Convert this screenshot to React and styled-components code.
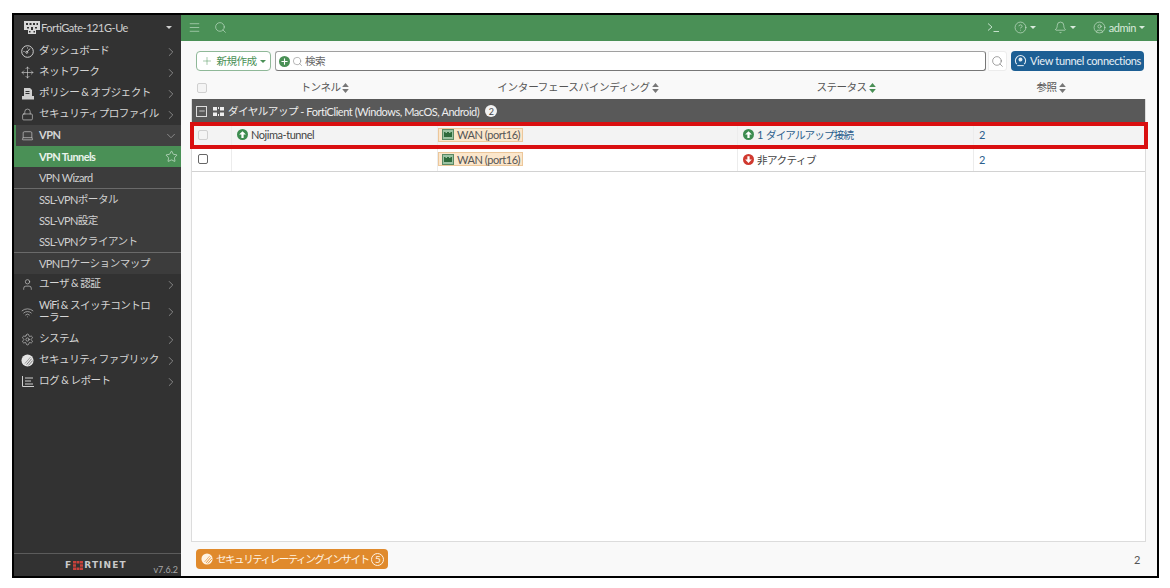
import React from 'react';
import styled, { createGlobalStyle } from 'styled-components';
import { ChevronRight, ChevronDown, Star, Search, Menu, Plus, Bell, CircleHelp, CircleUser, Move, User, Wifi, Settings, Lock, Laptop, Minus } from 'lucide-react';

const Global = createGlobalStyle`
  html, body { margin: 0; padding: 0; background: #fff; width: 1170px; height: 588px; overflow: hidden; }
  body { font-family: Lato, "Noto Sans CJK JP", sans-serif; font-size: 11px; color: #444; letter-spacing: -0.45px; }
  * { box-sizing: border-box; }
`;

const Frame = styled.div`
  position: relative; margin: 13px 0 0 12px; width: 1147px; height: 565px;
  border: 2px solid #000; display: flex; background: #f9f9f9;
`;
const Jp = styled.span`
  display: inline-block; font-size: 10.6px; letter-spacing: ${p => p.$ls ?? -0.55}px; white-space: nowrap;
  transform: translateY(${p => p.$flat ? 0 : -1}px);
`;
const Side = styled.aside`width: 167px; background: #323232; color: #d6d6d6; display: flex; flex-direction: column; flex: none;`;
const Brand = styled.div`height: 26px; display: flex; align-items: center; padding: 0 9px 1px 10px; gap: 1px; color: #cfcfcf; flex: none;`;
const BrandName = styled.span`flex: 1;`;
const Caret = styled.span`
  display: inline-block; width: 0; height: 0; border-left: 3px solid transparent; border-right: 3px solid transparent;
  border-top: 3.5px solid currentColor; flex: none;
`;
const Nav = styled.nav`flex: 1; display: flex; flex-direction: column;`;
const Item = styled.div`
  min-height: ${p => p.$tall ? 34 : 21}px; display: flex; align-items: center; padding: 0 3px 0 ${p => p.$bold ? 4 : 6}px; gap: 4px;
  font-weight: ${p => p.$bold ? 700 : 400}; line-height: 12.5px;
  background: ${p => p.$bold ? '#414141' : 'transparent'};
  border-left: ${p => p.$bold ? '2px solid #4a9056' : '0'};
`;
const ItemIcon = styled.span`width: 15px; height: 15px; display: flex; align-items: center; justify-content: center; color: #cfcfcf; flex: none;`;
const ItemText = styled.span`flex: 1;`;
const Arrow = styled.span`display: flex; color: #a8a8a8; flex: none;`;
const SubGroup = styled.div`background: #3c3c3c;`;
const Sub = styled.div`
  height: ${p => p.$sep ? 22 : 21}px; display: flex; align-items: center; padding: 0 3px ${p => p.$sep ? 1 : 0}px 25px;
  background: ${p => p.$active ? '#4a9056' : 'transparent'};
  color: ${p => p.$active ? '#e9f3eb' : '#d0d0d0'};
  font-weight: ${p => p.$active ? 700 : 400};
  letter-spacing: -0.6px;
  border-bottom: ${p => p.$sep ? '1px solid #6a6a6a' : '0'};
`;
const SideFoot = styled.div`height: 23px; border-top: 1px solid #5c5c5c; display: flex; align-items: center; position: relative; flex: none; padding-left: 51px;`;
const Logo = styled.div`display: flex; align-items: center; font-family: "DejaVu Sans", sans-serif; font-weight: 700; font-size: 9px; letter-spacing: 1.1px; color: #c9c9c9;`;
const Version = styled.span`position: absolute; right: 3px; bottom: 1px; font-size: 9px; letter-spacing: 0; color: #a8a8a8;`;

const Main = styled.main`flex: 1; min-width: 0; display: flex; flex-direction: column;`;
const Top = styled.header`height: 26px; background: #4a9056; display: flex; align-items: center; padding: 0 12px 2px 7px; color: #c4e0cb; flex: none;`;
const TopLeft = styled.div`display: flex; gap: 13px; align-items: center; flex: 1;`;
const TopRight = styled.div`display: flex; align-items: center; color: #d8eadc;`;
const TopBtn = styled.span`display: flex; align-items: center; gap: 3px; margin-left: ${p => p.$ml}px;`;

const Tools = styled.div`display: flex; align-items: center; height: 20px; margin: 10px 13px 0 15px; flex: none;`;
const NewBtn = styled.div`
  width: 75px; height: 20px; border: 1px solid #8fb898; border-radius: 4px; background: #fff; color: #4a9056;
  display: flex; align-items: center; justify-content: center; gap: 3px; flex: none;
`;
const SearchBox = styled.div`
  margin-left: 4px; flex: 1; height: 20px; background: #fff; border: 1px solid #a0a0a0; border-bottom-color: #777; border-right-color: #777; border-radius: 3px;
  display: flex; align-items: center; padding-left: 3px; gap: 2px; color: #666;
`;
const AddDot = styled.span`width: 11px; height: 11px; border-radius: 50%; background: #4a9056; color: #fff; display: flex; align-items: center; justify-content: center; flex: none;`;
const SearchBtn = styled.div`margin-left: 2px; width: 19px; height: 20px; background: #fff; border: 1px solid #ececec; border-radius: 0 3px 3px 0; display: flex; align-items: center; justify-content: center; color: #555; flex: none;`;
const ConnBtn = styled.div`
  margin-left: 4px; padding-bottom: 1px; width: 133px; height: 20px; background: #1d5f94; color: #e8f0f6; border-radius: 4px; flex: none; white-space: nowrap;
  display: flex; align-items: center; justify-content: center; gap: 3px; letter-spacing: -0.35px;
`;

const cols = '39px 206px 300px 236px 1fr';
const Head = styled.div`display: grid; grid-template-columns: ${cols}; height: 28px; padding-top: 5px; margin: 0 11px 0 10px; flex: none; align-items: center; color: #555;`;
const HeadCell = styled.div`display: flex; align-items: center; justify-content: center; padding-right: 16px; gap: 2px;`;
const CheckCell = styled.div`display: flex; align-items: center; padding-left: 6px; height: 100%;`;
const Check = styled.span`width: 10px; height: 10px; border-radius: 2px; border: 1px solid ${p => p.$dim ? '#d0d0d0' : '#666'}; background: ${p => p.$dim ? '#f4f4f4' : '#fff'}; display: block;`;
const Sort = styled.svg`width: 7px; height: 10px; flex: none; fill: ${p => p.$on ? '#4a9056' : '#777'};`;

const Panel = styled.section`flex: 1; margin: 0 11px 0 10px; background: #fff; border: 1px solid #dcdcdc; border-top: 0; min-height: 0;`;
const Group = styled.div`height: 24px; background: #595959; color: #eee; display: flex; align-items: center; padding-left: 4px; gap: 4px;`;
const Toggle = styled.span`width: 11px; height: 11px; margin-right: 2px; border: 1px solid #ddd; display: flex; align-items: center; justify-content: center; color: #fff; flex: none;`;
const Count = styled.span`width: 12px; height: 12px; border-radius: 50%; background: #f2f2f2; color: #444; font-size: 9px; letter-spacing: 0; display: flex; align-items: center; justify-content: center; margin-left: 2px;`;
const Row = styled.div`display: grid; grid-template-columns: ${cols}; height: ${p => p.$h}px; background: ${p => p.$alt ? '#f3f3f3' : '#fff'}; border-bottom: 1px solid ${p => p.$last ? '#d2d2d2' : '#eee'};`;
const Cell = styled.div`display: flex; align-items: center; padding-left: 5px; border-left: 1px solid #ececec; gap: 3px; color: ${p => p.$link ? '#2c5f8d' : '#444'};`;
const Badge = styled.span`
  display: flex; align-items: center; gap: 3px; height: 14px; padding: 0 2px 0 3px; margin-left: -5px; background: #fbe6cb; border: 1px solid #ecc79a; color: #555;
`;
const State = styled.span`width: 11px; height: 11px; border-radius: 50%; background: ${p => p.$c}; display: flex; align-items: center; justify-content: center; flex: none;`;

const Foot = styled.footer`height: 34px; margin: 0 11px 0 15px; display: flex; align-items: center; justify-content: space-between; flex: none;`;
const Rating = styled.div`width: 192px; height: 20px; background: #e08a2c; color: #fff3e2; border-radius: 4px; display: flex; align-items: center; padding-left: 5px; gap: 3px;`;
const RatingNum = styled.span`width: 13px; height: 13px; border: 1px solid #fff3e2; border-radius: 50%; display: flex; align-items: center; justify-content: center; font-size: 10px; letter-spacing: 0; flex: none;`;
const Total = styled.span`padding-right: 6px; color: #555;`;
const Highlight = styled.div`position: absolute; left: 176px; top: 107px; width: 958px; height: 27px; border: 4px solid #d90f10; pointer-events: none;`;

const SortIcon = ({ on }) => (
  <Sort viewBox="0 0 6 9" $on={on}><path d="M3 0 6 3.6H0zM3 9 0 5.4h6z" /></Sort>
);
const Fabric = ({ size = 13, stripe = '#777', fill = '#e4e4e4' }) => (
  <svg width={size} height={size} viewBox="0 0 14 14">
    <circle cx="7" cy="7" r="6.500" fill={fill} />
    <path d="M6 11.500 11.500 5M8 12.300 12.600 7" stroke={stripe} strokeWidth="1" />
    <path d="M4.200 10.300 10.300 3.300" stroke={stripe} strokeWidth=".7" />
  </svg>
);
const Dial = () => (
  <svg width="13" height="13" viewBox="0 0 13 13" fill="none" stroke="currentColor" strokeWidth="1">
    <circle cx="6.500" cy="6.500" r="5.800" /><path d="M6 7 9 3.500" /><circle cx="5.800" cy="7.300" r="1" />
    <path d="M2.500 6.500h1M6.500 2.500v1" />
  </svg>
);
const Policy = () => (
  <svg width="12" height="12" viewBox="0 0 12 12" fill="#cfcfcf">
    <path d="M2 0h6l2 2v6H2z" /><path d="M0 8h12v3.500H0z" /><path d="M3.500 3h4v1h-4zM3.500 5h4v1h-4z" fill="#323232" />
  </svg>
);
const Device = () => (
  <svg width="16" height="13" viewBox="0 0 16 13" fill="#d8d8d8">
    <path d="M0 0h16v9H12v4H4V9H0z" />
    <path d="M2 2h2v2H2zM5.500 2h2v2h-2zM9 2h2v2H9zM12.500 2h1.500v2h-1.500zM3 6h2v1.500H3zM7 6h2v3H7zM11 6h2v1.500h-2zM5 10h1.500v1.500H5zM9.500 10H11v1.500H9.500z" fill="#323232" />
  </svg>
);
const LogoMark = () => (
  <svg width="10" height="9" viewBox="0 0 10 9" style={{ margin: '0 1px' }} fill="#c8413a">
    <path d="M0 0h3v2.500H0zM3.500 0h3v2.500h-3zM7 0h3v2.500H7zM0 3.200h3v2.600H0zM7 3.200h3v2.600H7zM0 6.500h3V9H0zM3.500 6.500h3V9h-3zM7 6.500h3V9H7z" />
  </svg>
);
const Cross = () => (
  <svg width="11" height="9" viewBox="0 0 11 9" fill="#eee">
    <path d="M0 0h4v3.500H0zM5 0h1v2H5zM7 0h4v3.500H7zM0 5.500h4V9H0zM7 5.500h4V9H7zM5 7h1v2H5z" />
  </svg>
);
const Tunnel = () => (
  <svg width="13" height="13" viewBox="0 0 14 14" fill="none" stroke="#e8f0f6" strokeWidth="1.100">
    <path d="M3 11a5.500 5.500 0 1 1 8 0" /><circle cx="7" cy="6" r="1.600" fill="#e8f0f6" /><path d="M3.500 12.500h7" />
  </svg>
);
const Port = () => (
  <svg width="12" height="11" viewBox="0 0 12 11">
    <rect x=".5" y=".5" width="11" height="10" fill="#9cc3a3" stroke="#5b8a64" />
    <path d="M2 8V3h1.500v1H5V3h2v1h1.500V3H10v5z" fill="#2f6b3c" />
  </svg>
);
const Up = () => (
  <State $c="#3d8c50"><svg width="9" height="9" viewBox="0 0 8 8"><path d="M4 1 7 4H5v3H3V4H1z" fill="#fff" /></svg></State>
);
const Down = () => (
  <State $c="#d0392f"><svg width="9" height="9" viewBox="0 0 8 8"><path d="M4 7 1 4h2V1h2v3h2z" fill="#fff" /></svg></State>
);
const Prompt = () => (
  <svg width="12" height="11" viewBox="0 0 12 11" fill="none" stroke="#c4e0cb"><path d="M1 1.500 5 5 1 8.500M6.500 9.500H12" /></svg>
);

const chev = <Arrow><ChevronRight size={14} strokeWidth={1.200} /></Arrow>;
const S = 13, W = 1.200;
const items1 = [
  [<Dial />, 'ダッシュボード'],
  [<Move size={S} strokeWidth={W} />, 'ネットワーク'],
  [<Policy />, 'ポリシー & オブジェクト'],
  [<Lock size={S} strokeWidth={W} />, 'セキュリティプロファイル'],
];
const items2 = [
  [<User size={S} strokeWidth={W} />, 'ユーザ & 認証'],
  [<Wifi size={S} strokeWidth={W} />, <>WiFi & スイッチコントロ<br />ーラー</>, true],
  [<Settings size={S} strokeWidth={W} />, 'システム'],
  [<Fabric />, 'セキュリティファブリック'],
  [<svg width="12" height="11" viewBox="0 0 12 11" fill="none" stroke="#cfcfcf"><path d="M.5 0v10.500H12M3 2h8M3 5h6M3 8h8" /></svg>, 'ログ & レポート'],
];

const NavRow = ({ icon, text, tall }) => (
  <Item $tall={tall}>
    <ItemIcon>{icon}</ItemIcon><ItemText><Jp>{text}</Jp></ItemText>{chev}
  </Item>
);

export default function App() {
  return (
    <>
      <Global />
      <Frame>
        <Side>
          <Brand><Device /><BrandName>FortiGate-121G-Ue</BrandName><Caret /></Brand>
          <Nav>
            {items1.map(([i, t], n) => <NavRow key={n} icon={i} text={t} />)}
            <Item $bold>
              <ItemIcon><Laptop size={13} strokeWidth={1.200} /></ItemIcon><ItemText>VPN</ItemText><Arrow><ChevronDown size={14} strokeWidth={1.200} /></Arrow>
            </Item>
            <SubGroup>
              <Sub $active><ItemText>VPN Tunnels</ItemText><Star size={13} strokeWidth={1.100} color="#e8f4ea" /></Sub>
              <Sub $sep>VPN Wizard</Sub>
              <Sub>SSL-VPN<Jp>ポータル</Jp></Sub>
              <Sub>SSL-VPN<Jp>設定</Jp></Sub>
              <Sub $sep>SSL-VPN<Jp>クライアント</Jp></Sub>
              <Sub>VPN<Jp>ロケーションマップ</Jp></Sub>
            </SubGroup>
            {items2.map(([i, t, tall], n) => <NavRow key={n} icon={i} text={t} tall={tall} />)}
          </Nav>
          <SideFoot>
            <Logo>F<LogoMark />RTINET</Logo>
            <Version>v7.6.2</Version>
          </SideFoot>
        </Side>
        <Main>
          <Top>
            <TopLeft><Menu size={13} strokeWidth={1.200} /><Search size={13} strokeWidth={1.200} /></TopLeft>
            <TopRight>
              <Prompt />
              <TopBtn $ml={15}><CircleHelp size={13} strokeWidth={1.100} /><Caret /></TopBtn>
              <TopBtn $ml={18}><Bell size={13} strokeWidth={1.100} /><Caret /></TopBtn>
              <TopBtn $ml={17}><CircleUser size={13} strokeWidth={1.100} />admin<Caret /></TopBtn>
            </TopRight>
          </Top>
          <Tools>
            <NewBtn><Plus size={12} strokeWidth={1} /><Jp>新規作成</Jp><Caret /></NewBtn>
            <SearchBox>
              <AddDot><Plus size={9} strokeWidth={3} /></AddDot>
              <Search size={11} strokeWidth={1} />
              <Jp>検索</Jp>
            </SearchBox>
            <SearchBtn><Search size={13} strokeWidth={1} /></SearchBtn>
            <ConnBtn><Tunnel />View tunnel connections</ConnBtn>
          </Tools>
          <Head>
            <CheckCell><Check $dim /></CheckCell>
            <HeadCell><Jp>トンネル</Jp><SortIcon /></HeadCell>
            <HeadCell><Jp $ls={-0.3}>インターフェースバインディング</Jp><SortIcon /></HeadCell>
            <HeadCell><Jp>ステータス</Jp><SortIcon on /></HeadCell>
            <HeadCell><Jp>参照</Jp><SortIcon /></HeadCell>
          </Head>
          <Panel>
            <Group>
              <Toggle><Minus size={8} strokeWidth={2} /></Toggle>
              <Cross />
              <span><Jp>ダイヤルアップ</Jp> - FortiClient (Windows, MacOS, Android)</span>
              <Count>2</Count>
            </Group>
            <Row $alt $h={24}>
              <CheckCell><Check $dim /></CheckCell>
              <Cell><Up />Nojima-tunnel</Cell>
              <Cell><Badge><Port />WAN (port16)</Badge></Cell>
              <Cell $link><Up />1<Jp $flat $ls={-0.9}>ダイアルアップ接続</Jp></Cell>
              <Cell $link>2</Cell>
            </Row>
            <Row $h={25} $last>
              <CheckCell><Check /></CheckCell>
              <Cell />
              <Cell><Badge><Port />WAN (port16)</Badge></Cell>
              <Cell><Down /><Jp $flat>非アクティブ</Jp></Cell>
              <Cell $link>2</Cell>
            </Row>
          </Panel>
          <Foot>
            <Rating>
              <Fabric size={12} stripe="#e08a2c" fill="#fff3e2" />
              <Jp $ls={-1.55}>セキュリティレーティングインサイト</Jp>
              <RatingNum>5</RatingNum>
            </Rating>
            <Total>2</Total>
          </Foot>
        </Main>
        <Highlight />
      </Frame>
    </>
  );
}
